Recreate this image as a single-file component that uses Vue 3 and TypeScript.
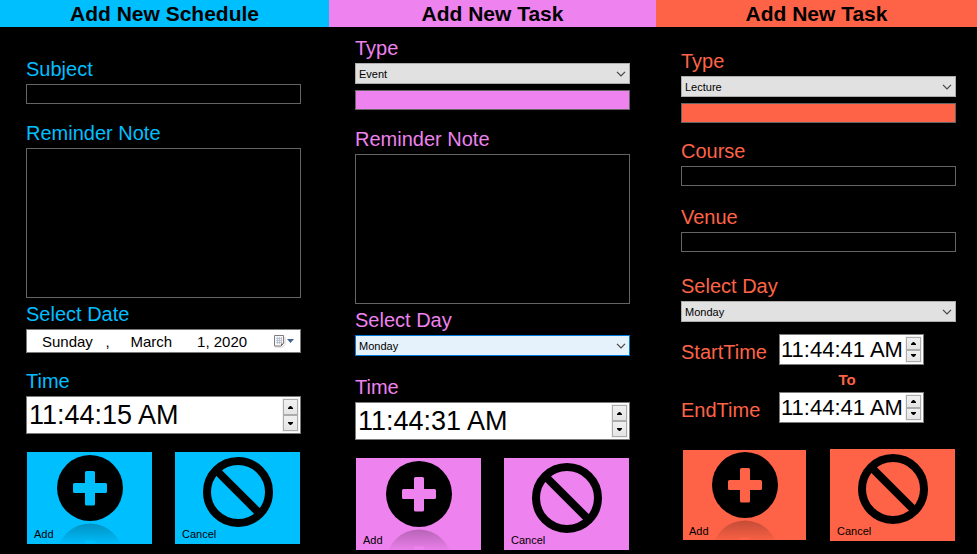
<script setup lang="ts">
import { ref } from 'vue'

type Field =
  | { kind: 'text' | 'filled' | 'note'; id: string; label?: string; gap: string }
  | { kind: 'select'; id: string; label: string; gap: string; options: string[]; active?: boolean }
  | { kind: 'date' | 'time'; id: string; label: string; gap: string; value: string }
  | { kind: 'range'; id: string; gap: string; start: string; end: string }

interface Panel {
  id: string
  title: string
  fields: Field[]
}

const days = ['Monday', 'Tuesday', 'Wednesday', 'Thursday', 'Friday', 'Saturday', 'Sunday']

const panels = ref<Panel[]>([
  {
    id: 'schedule',
    title: 'Add New Schedule',
    fields: [
      { kind: 'text', id: 'subject', label: 'Subject', gap: 'gap-30' },
      { kind: 'note', id: 'note', label: 'Reminder Note', gap: 'gap-17' },
      { kind: 'date', id: 'date', label: 'Select Date', gap: 'gap-4', value: 'Sunday   ,     March      1, 2020' },
      { kind: 'time', id: 'time', label: 'Time', gap: 'gap-16', value: '11:44:15 AM' },
    ],
  },
  {
    id: 'event',
    title: 'Add New Task',
    fields: [
      { kind: 'select', id: 'type', label: 'Type', gap: 'gap-9', options: ['Event', 'Lecture'] },
      { kind: 'filled', id: 'title', gap: 'gap-6' },
      { kind: 'note', id: 'note', label: 'Reminder Note', gap: 'gap-17' },
      { kind: 'select', id: 'day', label: 'Select Day', gap: 'gap-4', options: days, active: true },
      { kind: 'time', id: 'time', label: 'Time', gap: 'gap-19', value: '11:44:31 AM' },
    ],
  },
  {
    id: 'lecture',
    title: 'Add New Task',
    fields: [
      { kind: 'select', id: 'type', label: 'Type', gap: 'gap-22', options: ['Lecture', 'Event'] },
      { kind: 'filled', id: 'title', gap: 'gap-6' },
      { kind: 'text', id: 'course', label: 'Course', gap: 'gap-16' },
      { kind: 'text', id: 'venue', label: 'Venue', gap: 'gap-19' },
      { kind: 'select', id: 'day', label: 'Select Day', gap: 'gap-22', options: days },
      { kind: 'range', id: 'range', gap: 'gap-12', start: '11:44:41 AM', end: '11:44:41 AM' },
    ],
  },
])
</script>

<template>
  <main class="board">
    <form v-for="p in panels" :key="p.id" class="panel" :class="p.id" @submit.prevent>
      <h1 class="title">{{ p.title }}</h1>
      <div class="body">
        <div v-for="f in p.fields" :key="f.id" class="field" :class="f.gap">
          <label v-if="'label' in f && f.label" class="label" :for="`${p.id}-${f.id}`">{{ f.label }}</label>

          <input v-if="f.kind === 'text'" :id="`${p.id}-${f.id}`" class="box" type="text" />
          <input v-else-if="f.kind === 'filled'" :id="`${p.id}-${f.id}`" class="box filled" type="text" aria-label="Title" />
          <textarea v-else-if="f.kind === 'note'" :id="`${p.id}-${f.id}`" class="box note"></textarea>

          <div v-else-if="f.kind === 'select'" class="combo" :class="{ active: f.active }">
            <select :id="`${p.id}-${f.id}`">
              <option v-for="o in f.options" :key="o">{{ o }}</option>
            </select>
            <svg class="chevron" width="10" height="6" viewBox="0 0 10 6" aria-hidden="true">
              <path d="M1 0.8 L5 4.8 L9 0.8" fill="none" stroke="#444" stroke-width="1.2" />
            </svg>
          </div>

          <div v-else-if="f.kind === 'date'" class="picker date">
            <input :id="`${p.id}-${f.id}`" v-model="f.value" type="text" />
            <button class="calendar" type="button" aria-label="Open calendar">
              <svg width="22" height="14" viewBox="0 0 22 14" aria-hidden="true">
                <path d="M2 13 H9.5 L12 10.500 V3" fill="none" stroke="#d3cdcb" stroke-width="1" />
                <path d="M1.500 1.500 H10.500 V9.500 L8 12 H1.500 Z" fill="#f4f6fa" stroke="#857b7b" />
                <path d="M3 4.500 H9 M3 6.500 H9 M3 8.500 H9 M4.500 3 V10 M6.500 3 V10 M8.500 3 V9" stroke="#a9b4c8" stroke-width="0.7" />
                <path d="M8 12 V9.500 H10.500 Z" fill="#6d6262" />
                <path d="M14 5 H21 L17.500 9 Z" fill="#44618f" />
              </svg>
            </button>
          </div>

          <div v-else-if="f.kind === 'time'" class="picker time">
            <input :id="`${p.id}-${f.id}`" v-model="f.value" type="text" />
            <span class="spin">
              <button type="button" aria-label="Later"><svg width="5" height="3" viewBox="0 0 5 3"><path d="M0 3 V2 L2 0 H3 L5 2 V3 Z" /></svg></button>
              <button type="button" aria-label="Earlier"><svg width="5" height="3" viewBox="0 0 5 3"><path d="M0 0 V1 L2 3 H3 L5 1 V0 Z" /></svg></button>
            </span>
          </div>

          <div v-else-if="f.kind === 'range'" class="range">
            <label class="label" :for="`${p.id}-start`">StartTime</label>
            <div class="picker small">
              <input :id="`${p.id}-start`" v-model="f.start" type="text" />
              <span class="spin">
                <button type="button" aria-label="Later"><svg width="5" height="3" viewBox="0 0 5 3"><path d="M0 3 V2 L2 0 H3 L5 2 V3 Z" /></svg></button>
                <button type="button" aria-label="Earlier"><svg width="5" height="3" viewBox="0 0 5 3"><path d="M0 0 V1 L2 3 H3 L5 1 V0 Z" /></svg></button>
              </span>
            </div>
            <span class="to">To</span>
            <label class="label" :for="`${p.id}-end`">EndTime</label>
            <div class="picker small">
              <input :id="`${p.id}-end`" v-model="f.end" type="text" />
              <span class="spin">
                <button type="button" aria-label="Later"><svg width="5" height="3" viewBox="0 0 5 3"><path d="M0 3 V2 L2 0 H3 L5 2 V3 Z" /></svg></button>
                <button type="button" aria-label="Earlier"><svg width="5" height="3" viewBox="0 0 5 3"><path d="M0 0 V1 L2 3 H3 L5 1 V0 Z" /></svg></button>
              </span>
            </div>
          </div>
        </div>

        <div class="actions">
          <button class="action add" type="submit">
            <svg width="125" height="92" viewBox="0 0 125 92" aria-hidden="true">
              <defs>
                <linearGradient :id="`${p.id}-fade`" gradientUnits="userSpaceOnUse" x1="0" y1="71" x2="0" y2="92">
                  <stop offset="0" stop-color="#000" stop-opacity="0.24" />
                  <stop offset="1" stop-color="#000" stop-opacity="0.02" />
                </linearGradient>
              </defs>
              <circle cx="63" cy="36" r="33" />
              <path class="plus" d="M59.500 19 H66.500 Q68 19 68 20.500 V31 H78.500 Q80 31 80 32.500 V39.500 Q80 41 78.500 41 H68 V52 Q68 53.500 66.500 53.500 H59.500 Q58 53.500 58 52 V41 H47.500 Q46 41 46 39.500 V32.500 Q46 31 47.500 31 H58 V20.500 Q58 19 59.500 19 Z" />
              <path :fill="`url(#${p.id}-fade)`" fill-rule="evenodd" d="M30 104.500 A33 33 0 0 1 96 104.500 Z M58 88.500 H68 V104 H58 Z" />
            </svg>
            <span>Add</span>
          </button>
          <button class="action" type="button">
            <svg width="125" height="92" viewBox="0 0 125 92" aria-hidden="true">
              <circle cx="63" cy="40" r="31" fill="none" stroke="#000" stroke-width="8" />
              <path d="M42 19 L84 61" stroke="#000" stroke-width="8" />
            </svg>
            <span>Cancel</span>
          </button>
        </div>
      </div>
    </form>
  </main>
</template>

<style>
body {
  background: #000;
}
</style>

<style scoped>
.board {
  display: grid;
  grid-template-columns: 329fr 327fr 321fr;
  min-height: 100vh;
  background: #000;
  font-family: "Liberation Sans", Arial, sans-serif;
}
.panel {
  min-width: 0;
}
.schedule { --accent: #00bfff; }
.event { --accent: #ee82ee; }
.lecture { --accent: #ff6347; }

.title {
  margin: 0;
  height: 27px;
  background: var(--accent);
  color: #000;
  font-size: 21px;
  font-weight: bold;
  line-height: 27px;
  text-align: center;
}
.body {
  display: flex;
  flex-direction: column;
  padding: 0 26px;
}
.schedule .body { padding-right: 28px; }
.lecture .body { padding: 0 21px 0 25px; }

.field {
  display: flex;
  flex-direction: column;
  gap: 3px;
}
.gap-4 { margin-top: 4px; }
.gap-6 { margin-top: 6px; }
.gap-9 { margin-top: 9px; }
.gap-12 { margin-top: 12px; }
.gap-16 { margin-top: 16px; }
.gap-17 { margin-top: 17px; }
.gap-19 { margin-top: 19px; }
.gap-22 { margin-top: 22px; }
.gap-30 { margin-top: 30px; }

.label {
  color: var(--accent);
  font-size: 20px;
  line-height: 24px;
}

input,
select,
textarea,
button {
  box-sizing: border-box;
  margin: 0;
  border: 0;
  border-radius: 0;
  outline: 0;
  font-family: inherit;
}

.box {
  width: 100%;
  height: 20px;
  padding: 2px 3px;
  border: 1px solid #646464;
  background: #000;
  color: var(--accent);
  font-size: 11px;
}
.filled {
  background: var(--accent);
  color: #000;
}
.note {
  display: block;
  height: 150px;
  resize: none;
}

.combo {
  display: grid;
  align-items: center;
}
.combo select {
  grid-area: 1 / 1;
  width: 100%;
  height: 21px;
  padding: 0 24px 0 3px;
  border: 1px solid #adadad;
  background: #e1e1e1;
  color: #000;
  font-size: 11px;
  appearance: none;
}
.combo.active select {
  border-color: #0078d7;
  background: #e5f1fb;
}
.chevron {
  grid-area: 1 / 1;
  justify-self: end;
  margin-right: 4px;
  pointer-events: none;
}

.picker {
  display: flex;
  box-sizing: border-box;
  border: 1px solid #7a7a7a;
  background: #fff;
}
.picker input {
  flex: 1;
  min-width: 0;
  padding: 0 0 0 2px;
  background: transparent;
  color: #000;
}
.date { height: 24px; }
.date input {
  padding-left: 15px;
  font-size: 15px;
}
.calendar {
  display: flex;
  align-items: center;
  padding: 0 5px 0 0;
  background: transparent;
}
.time { height: 38px; }
.time input { font-size: 27px; }
.small { height: 31px; }
.small input {
  padding-left: 1px;
  font-size: 22px;
}

.spin {
  display: flex;
  flex-direction: column;
  margin: 1px;
  padding: 1px;
  background: #f0f0f0;
}
.spin button {
  display: flex;
  flex: 1;
  align-items: center;
  justify-content: center;
  width: 15px;
  min-height: 0;
  padding: 0;
  border: 1px solid #acacac;
  background: linear-gradient(#f0f0f0, #e5e5e5);
}

.range {
  display: grid;
  grid-template-columns: 98px 145px;
  grid-template-rows: 31px 27px 31px;
}
.range .label {
  align-self: end;
  padding-bottom: 1px;
}
.to {
  grid-column: 2;
  padding-right: 9px;
  color: var(--accent);
  font-size: 15px;
  font-weight: bold;
  line-height: 30px;
  text-align: center;
}

.actions {
  display: flex;
  gap: 23px;
  margin-top: 18px;
  padding: 0 1px;
}
.lecture .actions { margin-top: 26px; }
.action {
  display: grid;
  flex: 1;
  min-width: 0;
  height: 92px;
  padding: 0;
  overflow: hidden;
  background: var(--accent);
  color: #000;
  font-size: 11px;
}
.action svg {
  grid-area: 1 / 1;
  justify-self: center;
}
.action span {
  grid-area: 1 / 1;
  align-self: end;
  justify-self: start;
  padding: 0 0 4px 7px;
}
.lecture .add {
  box-shadow: inset 0 0 0 1px #000;
}
.plus {
  fill: var(--accent);
}
</style>
